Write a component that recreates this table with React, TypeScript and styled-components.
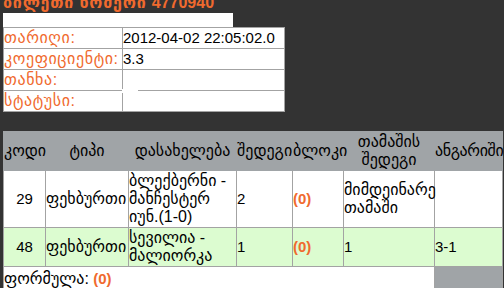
import styled, { createGlobalStyle } from "styled-components";

const ORANGE = "#f06a2e";
const LINE = "#a3a3a3";
const HEAD = "#a0a4a7";

const GlobalStyle = createGlobalStyle`
  html, body {
    margin: 0;
    padding: 0;
    background: #333333;
  }
  body {
    font-family: "Liberation Sans", "DejaVu Sans", sans-serif;
    font-size: 16px;
    color: #000;
  }
`;

type Match = {
  code: string;
  type: string;
  name: string;
  result: string;
  block: string;
  game: string;
  score: string;
  green?: boolean;
};

const matches: Match[] = [
  {
    code: "29",
    type: "ფეხბურთი",
    name: "ბლექბერნი - მანჩესტერ იუნ.(1-0)",
    result: "2",
    block: "(0)",
    game: "მიმდეინარე თამაში",
    score: "",
  },
  {
    code: "48",
    type: "ფეხბურთი",
    name: "სევილია - მალიორკა",
    result: "1",
    block: "(0)",
    game: "1",
    score: "3-1",
    green: true,
  },
];

const info = [
  { label: "თარიღი:", value: "2012-04-02 22:05:02.0" },
  { label: "კოეფიციენტი:", value: "3.3" },
  { label: "თანხა:", value: "" },
  { label: "სტატუსი:", value: "" },
];

const isNum = (s: string) => /^[\d.\-]*$/.test(s);

const App = () => {
  return (
    <Page>
      <GlobalStyle />
      <Title>
        <TitleWords>ბილეთი ნომერი </TitleWords>4770940
      </Title>
      <WhiteBar />
      <InfoTable>
        <tbody>
          {info.map((row, i) => (
            <tr key={row.label}>
              <InfoLabel>{row.label}</InfoLabel>
              <InfoValue $glitch={i === 3}>{row.value}</InfoValue>
            </tr>
          ))}
        </tbody>
      </InfoTable>

      <Board>
        <colgroup>
          <col style={{ width: 42 }} />
          <col style={{ width: 83 }} />
          <col style={{ width: 108 }} />
          <col style={{ width: 56 }} />
          <col style={{ width: 51 }} />
          <col style={{ width: 91 }} />
          <col style={{ width: 68 }} />
        </colgroup>
        <thead>
          <tr>
            <HeadCell>კოდი</HeadCell>
            <HeadCell>ტიპი</HeadCell>
            <HeadCell>დასახელება</HeadCell>
            <HeadCell>შედეგი</HeadCell>
            <HeadCell>ბლოკი</HeadCell>
            <HeadCell>თამაშის შედეგი</HeadCell>
            <HeadCell $tight>ანგარიში</HeadCell>
          </tr>
        </thead>
        <tbody>
          {matches.map((m) => (
            <Row key={m.code} $green={m.green}>
              <Cell $center $num>
                {m.code}
              </Cell>
              <Cell>{m.type}</Cell>
              <Cell>{m.name}</Cell>
              <Cell $num>{m.result}</Cell>
              <Cell $num>
                <Accent>{m.block}</Accent>
              </Cell>
              <Cell $num={isNum(m.game)}>{m.game}</Cell>
              <Cell $num>{m.score}</Cell>
            </Row>
          ))}
          <tr>
            <FormulaCell colSpan={6}>
              ფორმულა: <Accent>(0)</Accent>
            </FormulaCell>
            <EmptyCell />
          </tr>
        </tbody>
      </Board>
    </Page>
  );
};

export default App;

const Page = styled.div`
  padding: 0 3px;
  height: 288px;
  overflow: hidden;
`;

const Title = styled.div`
  margin-top: -7px;
  height: 20px;
  line-height: 20px;
  font-size: 16px;
  font-weight: 700;
  color: ${ORANGE};
  white-space: nowrap;
`;

const TitleWords = styled.span`
  letter-spacing: 0.8px;
`;

const WhiteBar = styled.div`
  width: 230px;
  height: 14px;
  background: #fff;
`;

const InfoTable = styled.table`
  border-collapse: collapse;
  background: #fff;
  line-height: 18px;

  td {
    border: 1px solid ${LINE};
    padding: 1px 0;
    height: 18px;
    vertical-align: middle;
    white-space: nowrap;
  }
`;

const InfoLabel = styled.td`
  width: 118px;
  color: ${ORANGE};
  letter-spacing: 0.6px;
`;

const InfoValue = styled.td<{ $glitch?: boolean }>`
  width: 161px;
  font-size: 15px;
  position: relative;

  &::before {
    content: "";
    display: ${({ $glitch }) => ($glitch ? "block" : "none")};
    position: absolute;
    left: -1px;
    top: -2px;
    width: 16px;
    height: 4px;
    background: #fff;
  }
`;

const Board = styled.table`
  margin-top: 19px;
  width: 500px;
  table-layout: fixed;
  border-collapse: collapse;
  background: ${HEAD};
  line-height: 18px;
`;

const HeadCell = styled.th<{ $tight?: boolean }>`
  border: 1px solid ${HEAD};
  padding: 1px 0;
  font-weight: 400;
  letter-spacing: ${({ $tight }) => ($tight ? "-0.4px" : "0")};
  text-align: center;
  vertical-align: middle;
  white-space: ${({ $tight }) => ($tight ? "nowrap" : "normal")};
`;

const Row = styled.tr<{ $green?: boolean }>`
  background: ${({ $green }) => ($green ? "#dcfcd0" : "#fff")};
`;

const Cell = styled.td<{ $center?: boolean; $num?: boolean }>`
  border: 1px solid ${LINE};
  padding: 1px 0;
  font-size: ${({ $num }) => ($num ? "15px" : "16px")};
  text-align: ${({ $center }) => ($center ? "center" : "left")};
  vertical-align: middle;
`;

const Accent = styled.span`
  color: ${ORANGE};
  font-size: 15px;
  font-weight: 700;
`;

const FormulaCell = styled.td`
  border: 1px solid ${LINE};
  padding: 3px 0 1px;
  background: #fff;
  white-space: nowrap;
`;

const EmptyCell = styled.td`
  border: 1px solid ${LINE};
`;
